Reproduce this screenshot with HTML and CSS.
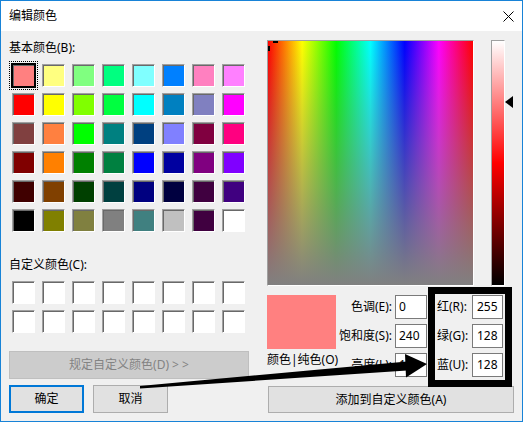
FILE: index.html
```html
<!DOCTYPE html>
<html lang="zh-CN">
<head>
<meta charset="utf-8">
<title>编辑颜色</title>
<link rel="stylesheet" href="styles.css">
</head>
<body>
<div class="dialog">
  <div class="titlebar">
    <span class="title">编辑颜色</span>
    <svg class="close" width="11" height="11" viewBox="0 0 11 11"><path d="M0.5 0.5L10.5 10.5M10.5 0.5L0.5 10.5" stroke="#000" stroke-width="1" fill="none"/></svg>
  </div>
  <div class="body">
    <div class="left">
      <div class="label">基本颜色(B):</div>
      <div class="swatches basic">
        <div class="sw sel" style="background:#ff8080"></div>
        <div class="sw" style="background:#ffff80"></div>
        <div class="sw" style="background:#80ff80"></div>
        <div class="sw" style="background:#00ff80"></div>
        <div class="sw" style="background:#80ffff"></div>
        <div class="sw" style="background:#0080ff"></div>
        <div class="sw" style="background:#ff80c0"></div>
        <div class="sw" style="background:#ff80ff"></div>

        <div class="sw" style="background:#ff0000"></div>
        <div class="sw" style="background:#ffff00"></div>
        <div class="sw" style="background:#80ff00"></div>
        <div class="sw" style="background:#00ff40"></div>
        <div class="sw" style="background:#00ffff"></div>
        <div class="sw" style="background:#0080c0"></div>
        <div class="sw" style="background:#8080c0"></div>
        <div class="sw" style="background:#ff00ff"></div>

        <div class="sw" style="background:#804040"></div>
        <div class="sw" style="background:#ff8040"></div>
        <div class="sw" style="background:#00ff00"></div>
        <div class="sw" style="background:#008080"></div>
        <div class="sw" style="background:#004080"></div>
        <div class="sw" style="background:#8080ff"></div>
        <div class="sw" style="background:#800040"></div>
        <div class="sw" style="background:#ff0080"></div>

        <div class="sw" style="background:#800000"></div>
        <div class="sw" style="background:#ff8000"></div>
        <div class="sw" style="background:#008000"></div>
        <div class="sw" style="background:#008040"></div>
        <div class="sw" style="background:#0000ff"></div>
        <div class="sw" style="background:#0000a0"></div>
        <div class="sw" style="background:#800080"></div>
        <div class="sw" style="background:#8000ff"></div>

        <div class="sw" style="background:#400000"></div>
        <div class="sw" style="background:#804000"></div>
        <div class="sw" style="background:#004000"></div>
        <div class="sw" style="background:#004040"></div>
        <div class="sw" style="background:#000080"></div>
        <div class="sw" style="background:#000040"></div>
        <div class="sw" style="background:#400040"></div>
        <div class="sw" style="background:#400080"></div>

        <div class="sw" style="background:#000000"></div>
        <div class="sw" style="background:#808000"></div>
        <div class="sw" style="background:#808040"></div>
        <div class="sw" style="background:#808080"></div>
        <div class="sw" style="background:#408080"></div>
        <div class="sw" style="background:#c0c0c0"></div>
        <div class="sw" style="background:#400040"></div>
        <div class="sw" style="background:#ffffff"></div>
      </div>

      <div class="label custom-label">自定义颜色(C):</div>
      <div class="swatches custom">
        <div class="sw empty"></div><div class="sw empty"></div><div class="sw empty"></div><div class="sw empty"></div>
        <div class="sw empty"></div><div class="sw empty"></div><div class="sw empty"></div><div class="sw empty"></div>
        <div class="sw empty"></div><div class="sw empty"></div><div class="sw empty"></div><div class="sw empty"></div>
        <div class="sw empty"></div><div class="sw empty"></div><div class="sw empty"></div><div class="sw empty"></div>
      </div>

      <div class="btn disabled define">规定自定义颜色(D) &gt; &gt;</div>
      <div class="btnrow">
        <div class="btn default">确定</div>
        <div class="btn">取消</div>
      </div>
    </div>

    <div class="right">
      <div class="spectrum-row">
        <div class="spectrum"><span class="cross-h"></span><span class="cross-v"></span></div>
        <div class="lum"></div>
        <div class="lum-marker"></div>
      </div>
      <div class="lower">
        <div class="preview-col">
          <div class="preview"></div>
          <div class="label solid-label">颜色|纯色(O)</div>
        </div>
        <div class="fields">
          <span class="flabel hsl">色调(E):</span><span class="input">0</span>
          <span class="flabel rgb">红(R):</span><span class="input rgb-in">255</span>
          <span class="flabel hsl">饱和度(S):</span><span class="input">240</span>
          <span class="flabel rgb">绿(G):</span><span class="input rgb-in">128</span>
          <span class="flabel hsl">亮度(L):</span><span class="input">192</span>
          <span class="flabel rgb">蓝(U):</span><span class="input rgb-in">128</span>
        </div>
      </div>
      <div class="btn add">添加到自定义颜色(A)</div>
    </div>
  </div>
</div>

<svg class="annot" width="524" height="423" viewBox="0 0 524 423">
  <rect x="431.5" y="290.5" width="77" height="93" fill="none" stroke="#000" stroke-width="7"/>
  <polygon points="140,386 407,361.5 407,370.5 140,388.5" fill="#000"/>
  <polygon points="405,354 427,364 406,377.5" fill="#000"/>
</svg>
</body>
</html>
```

FILE: styles.css
```css
* { box-sizing: border-box; }

html, body {
  margin: 0;
  padding: 0;
  background: #fff;
}

body {
  position: relative;
  width: 524px;
  height: 423px;
  overflow: hidden;
  font-family: "Noto Sans", "Noto Sans CJK SC", sans-serif;
  font-size: 12px;
  color: #000;
}

.dialog {
  width: 523px;
  height: 422px;
  border: 1px solid #1883d7;
  background: #f0f0f0;
  display: flex;
  flex-direction: column;
}

.titlebar {
  flex: none;
  height: 30px;
  background: #fff;
  display: flex;
  align-items: center;
  justify-content: space-between;
  padding: 0 8px;
}

.title { line-height: 16px; }

.close { display: block; }

.body {
  flex: 1;
  display: flex;
  gap: 18px;
  padding: 9px 8px 0 8px;
}

.left {
  width: 240px;
  display: flex;
  flex-direction: column;
}

.label {
  line-height: 16px;
  height: 16px;
  white-space: nowrap;
}

.swatches {
  display: grid;
  grid-template-columns: repeat(8, 23px);
  grid-auto-rows: 23px;
  column-gap: 7px;
  row-gap: 6px;
  margin: 8px 0 0 3px;
}

.sw {
  width: 23px;
  height: 23px;
  border: 1px solid;
  border-color: #a0a0a0 #fff #fff #a0a0a0;
  box-shadow: inset 1px 1px 0 #696969;
}

.sw.empty { background: #fff; }

.sw.sel {
  border-color: #000;
  box-shadow: inset 1px 1px 0 #696969, 0 0 0 1px #000;
  outline: 1px dotted #000;
  outline-offset: 2px;
}

.custom-label { margin-top: 25px; }

.btn {
  height: 28px;
  display: flex;
  align-items: center;
  justify-content: center;
  background: #e1e1e1;
  border: 1px solid #adadad;
  white-space: nowrap;
  line-height: 16px;
}

.btn.disabled {
  background: #cccccc;
  border-color: #bfbfbf;
  color: #838383;
}

.define { margin-top: 18px; width: 240px; }

.btnrow {
  display: flex;
  gap: 9px;
  margin-top: 6px;
}

.btnrow .btn { width: 75px; }

.btn.default { border: 2px solid #0078d7; }

.right {
  width: 247px;
  display: flex;
  flex-direction: column;
}

.spectrum-row {
  display: flex;
  height: 246px;
}

.spectrum {
  position: relative;
  width: 207px;
  height: 246px;
  border: 1px solid;
  border-color: #a0a0a0 #fff #fff #a0a0a0;
  background:
    linear-gradient(to bottom, rgba(128,128,128,0), #808080),
    linear-gradient(to right, #f00 0%, #ff0 16.67%, #0f0 33.33%, #0ff 50%, #00f 66.67%, #f0f 83.33%, #f00 100%);
}

.cross-h {
  position: absolute;
  left: 5px;
  top: 0;
  width: 5px;
  height: 2px;
  background: #000;
}

.cross-v {
  position: absolute;
  left: 0;
  top: 5px;
  width: 2px;
  height: 5px;
  background: #000;
}

.lum {
  width: 14px;
  height: 246px;
  margin-left: 17px;
  border: 1px solid;
  border-color: #a0a0a0 #fff #fff #a0a0a0;
  background: linear-gradient(to bottom, #fff 0%, #ff8080 25%, #f00 50%, #000 100%);
}

.lum-marker {
  width: 0;
  height: 0;
  margin-top: 56px;
  border-right: 8px solid #000;
  border-top: 6px solid transparent;
  border-bottom: 6px solid transparent;
}

.lower {
  display: flex;
  margin-top: 9px;
}

.preview-col {
  width: 69px;
  display: flex;
  flex-direction: column;
}

.preview {
  width: 69px;
  height: 54px;
  background: #ff8080;
}

.solid-label { margin-top: 3px; }

.fields {
  display: grid;
  grid-template-columns: 59px 32px 41px 35px;
  grid-auto-rows: 24px;
  row-gap: 5px;
  align-items: center;
}

.flabel {
  line-height: 16px;
  white-space: nowrap;
}

.flabel.hsl {
  justify-self: end;
  padding-right: 3px;
}

.flabel.rgb { padding-left: 10px; }

.input {
  display: block;
  height: 24px;
  width: 32px;
  background: #fff;
  border: 1px solid #7a7a7a;
  padding-left: 3px;
  line-height: 22px;
}

.input.rgb-in {
  width: 31px;
  margin-left: 4px;
  padding-left: 4px;
}

.btn.add {
  margin-top: 9px;
  margin-left: 1px;
  width: 246px;
  height: 27px;
}

.annot {
  position: absolute;
  left: 0;
  top: 0;
  pointer-events: none;
}
```
